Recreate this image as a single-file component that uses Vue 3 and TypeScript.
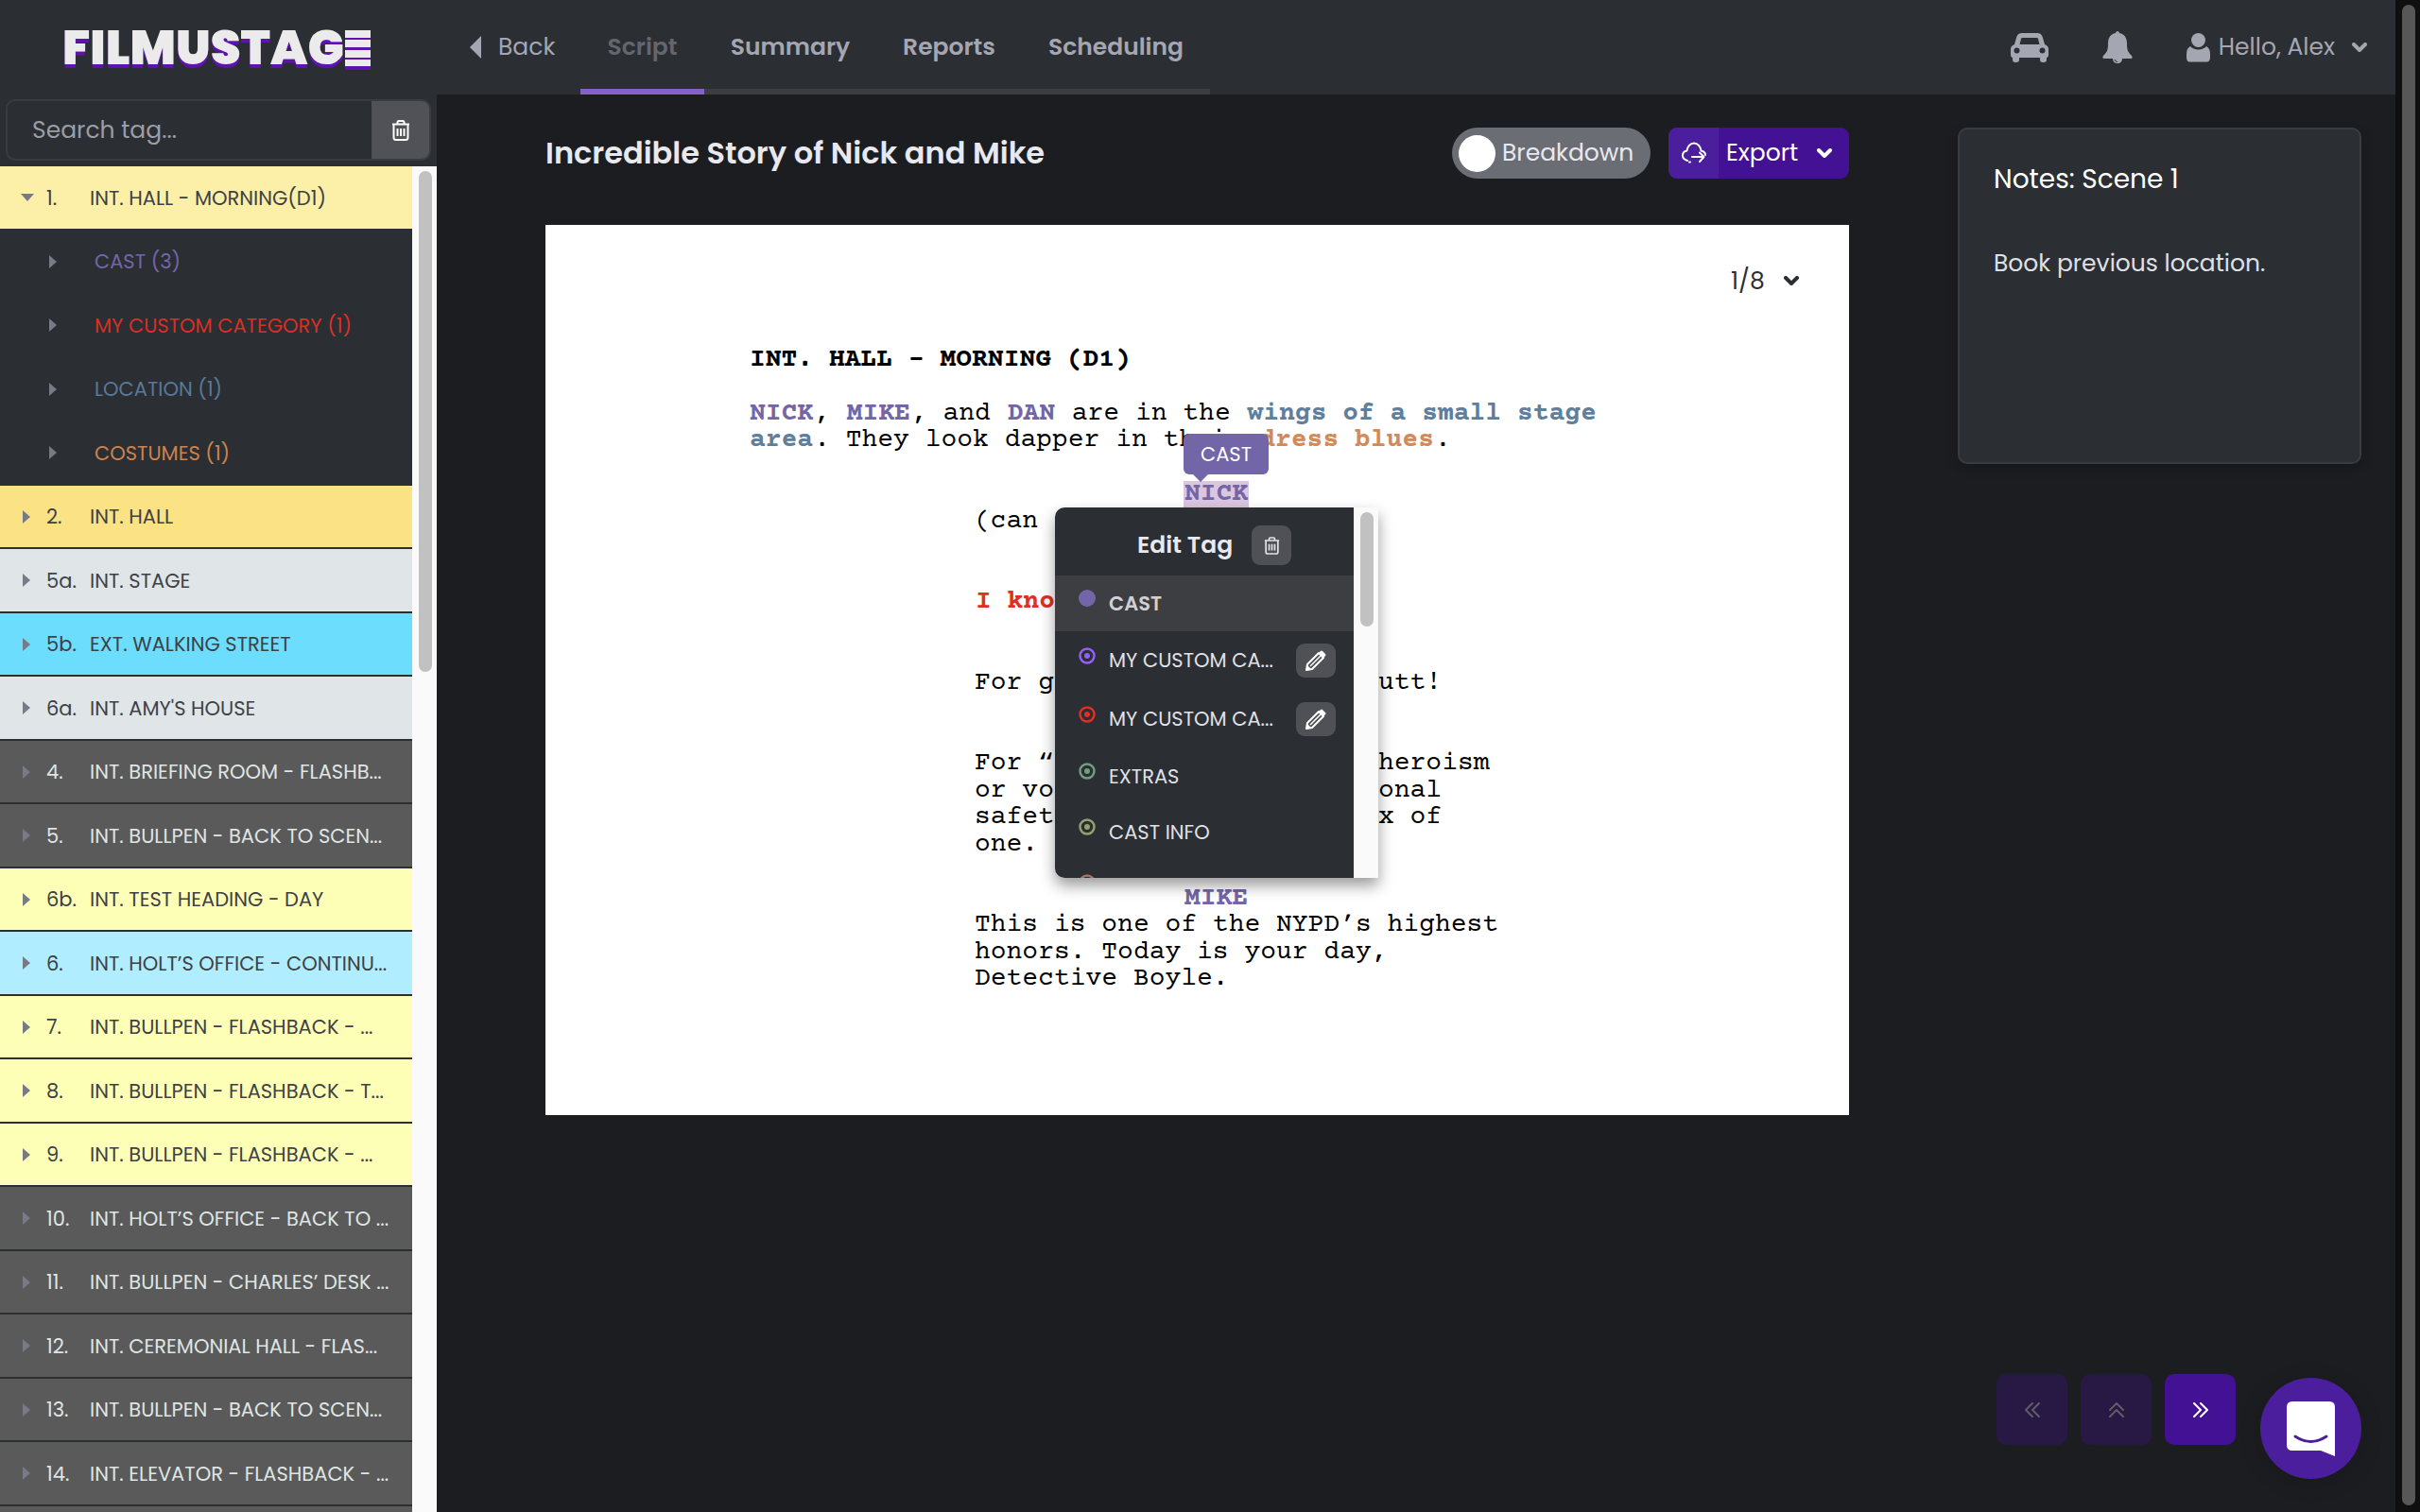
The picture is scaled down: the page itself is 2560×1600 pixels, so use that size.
<script setup lang="ts">
import { ref } from 'vue'

interface Row {
  no?: string
  title: string
  tone: string
  open?: boolean
  child?: boolean
}

interface Segment {
  text: string
  tag?: string
}

interface Line {
  row: number
  indent: string
  segments: Segment[]
  active?: boolean
}

const rows: Row[] = [
  { no: '1.', title: 'INT. HALL - MORNING(D1)', tone: 'cream', open: true },
  { title: 'CAST (3)', tone: 'cast', child: true },
  { title: 'MY CUSTOM CATEGORY (1)', tone: 'custom', child: true },
  { title: 'LOCATION (1)', tone: 'location', child: true },
  { title: 'COSTUMES (1)', tone: 'costumes', child: true },
  { no: '2.', title: 'INT. HALL', tone: 'gold' },
  { no: '5a.', title: 'INT. STAGE', tone: 'silver' },
  { no: '5b.', title: 'EXT. WALKING STREET', tone: 'cyan' },
  { no: '6a.', title: "INT. AMY'S HOUSE", tone: 'silver' },
  { no: '4.', title: 'INT. BRIEFING ROOM - FLASHB...', tone: 'gray' },
  { no: '5.', title: 'INT. BULLPEN - BACK TO SCEN...', tone: 'gray' },
  { no: '6b.', title: 'INT. TEST HEADING - DAY', tone: 'lemon' },
  { no: '6.', title: 'INT. HOLT’S OFFICE - CONTINU...', tone: 'sky' },
  { no: '7.', title: 'INT. BULLPEN - FLASHBACK - ...', tone: 'lemon' },
  { no: '8.', title: 'INT. BULLPEN - FLASHBACK - T...', tone: 'lemon' },
  { no: '9.', title: 'INT. BULLPEN - FLASHBACK - ...', tone: 'lemon' },
  { no: '10.', title: 'INT. HOLT’S OFFICE - BACK TO ...', tone: 'gray' },
  { no: '11.', title: 'INT. BULLPEN - CHARLES’ DESK ...', tone: 'gray' },
  { no: '12.', title: 'INT. CEREMONIAL HALL - FLAS...', tone: 'gray' },
  { no: '13.', title: 'INT. BULLPEN - BACK TO SCEN...', tone: 'gray' },
  { no: '14.', title: 'INT. ELEVATOR - FLASHBACK - ...', tone: 'gray' },
  { no: '', title: '', tone: 'gray' },
]

const tabs = ['Script', 'Summary', 'Reports', 'Scheduling']

const lines: Line[] = [
  { row: 1, indent: 'action', segments: [{ text: 'INT. HALL - MORNING (D1)', tag: 'heading' }] },
  {
    row: 3,
    indent: 'action',
    segments: [
      { text: 'NICK', tag: 'cast' },
      { text: ', ' },
      { text: 'MIKE', tag: 'cast' },
      { text: ', and ' },
      { text: 'DAN', tag: 'cast' },
      { text: ' are in the ' },
      { text: 'wings of a small stage', tag: 'location' },
    ],
  },
  {
    row: 4,
    indent: 'action',
    segments: [
      { text: 'area', tag: 'location' },
      { text: '. They look dapper in their ' },
      { text: 'dress blues', tag: 'costumes' },
      { text: '.' },
    ],
  },
  { row: 6, indent: 'speaker', segments: [{ text: 'NICK', tag: 'cast' }], active: true },
  { row: 7, indent: 'speech', segments: [{ text: '(can' }] },
  { row: 10, indent: 'speech', segments: [{ text: 'I kno', tag: 'custom' }] },
  { row: 13, indent: 'speech', segments: [{ text: 'For g' }] },
  { row: 13, indent: 'tail', segments: [{ text: 'utt!' }] },
  { row: 16, indent: 'speech', segments: [{ text: 'For “' }] },
  { row: 16, indent: 'tail', segments: [{ text: 'heroism' }] },
  { row: 17, indent: 'speech', segments: [{ text: 'or vo' }] },
  { row: 17, indent: 'tail', segments: [{ text: 'onal' }] },
  { row: 18, indent: 'speech', segments: [{ text: 'safet' }] },
  { row: 18, indent: 'tail', segments: [{ text: 'x of' }] },
  { row: 19, indent: 'speech', segments: [{ text: 'one.' }] },
  { row: 21, indent: 'speaker', segments: [{ text: 'MIKE', tag: 'cast' }] },
  { row: 22, indent: 'speech', segments: [{ text: 'This is one of the NYPD’s highest' }] },
  { row: 23, indent: 'speech', segments: [{ text: 'honors. Today is your day,' }] },
  { row: 24, indent: 'speech', segments: [{ text: 'Detective Boyle.' }] },
]

const categories = [
  { label: 'CAST', color: '#7366a8', selected: true },
  { label: 'MY CUSTOM CA...', color: '#9360f5', editable: true },
  { label: 'MY CUSTOM CA...', color: '#e02f23', editable: true },
  { label: 'EXTRAS', color: '#6f9f7d' },
  { label: 'CAST INFO', color: '#95a070' },
  { label: '', color: '#a9745f' },
]

const search = ref('')
const breakdown = ref(false)
const pageLength = ref('1/8')
</script>

<template>
  <div class="app">
    <header class="topbar">
      <a class="logo" href="#" aria-label="Filmustage">FILMUSTAG<span class="logo-e">E</span></a>
      <a class="back" href="#">
        <svg width="12" height="24" viewBox="0 0 12 24"><path d="M12 0v24L0 12z" fill="currentColor" /></svg>
        Back
      </a>
      <nav class="tabs">
        <a v-for="(tab, i) in tabs" :key="tab" href="#" :class="['tab', { current: i === 0 }]">{{ tab }}</a>
      </nav>
      <div class="account">
        <button class="icon-button" type="button" aria-label="Transport">
          <svg width="40" height="32" viewBox="0 0 40 32" fill="currentColor">
            <path
              fill-rule="evenodd"
              d="M13 1h14c4 0 6 1 7 5l2 7c3 1 4 3 4 5v6c0 2-1 3-2 3v2a3 3 0 0 1-3 3h-1a3 3 0 0 1-3-3v-2H9v2a3 3 0 0 1-3 3H5a3 3 0 0 1-3-3v-2c-1 0-2-1-2-3v-6c0-2 1-4 4-5l2-7c1-4 3-5 7-5zM13 6c-1 0-2 0-2 1l-1.500 6h21L29 7c0-1-1-1-2-1zM6.500 16.500a3 3 0 1 0 0 6 3 3 0 0 0 0-6zM33.500 16.500a3 3 0 1 0 0 6 3 3 0 0 0 0-6z"
            />
          </svg>
        </button>
        <button class="icon-button" type="button" aria-label="Notifications">
          <svg width="32" height="34" viewBox="0 0 32 34" fill="currentColor">
            <path d="M16 0c1 0 2 1 2 2 6 1 8 6 8 11 0 7 1 9 5 13 1 1 1 3-1 3H2c-2 0-2-2-1-3 4-4 5-6 5-13 0-5 2-10 8-11 0-1 1-2 2-2z" />
            <path d="M11 29h10c0 3-2 5-5 5s-5-2-5-5z" />
            <path d="M13 30q1 2.500 3 2.500" fill="none" stroke="#2b2e32" />
          </svg>
        </button>
        <button class="user" type="button">
          <svg width="25" height="31" viewBox="0 0 25 31" fill="currentColor">
            <circle cx="12.500" cy="7.500" r="7.500" />
            <path d="M4 14c2 2 5 3.500 8.500 3.500s6.500-1.500 8.500-3.500c3 1.500 4 4.500 4 8.500v3c0 3-1 5-4 5H4c-3 0-4-2-4-5v-3c0-4 1-7 4-8.500z" />
          </svg>
          <span>Hello, Alex</span>
          <svg class="chevron" width="16" height="10" viewBox="0 0 16 10"><path d="M2 2l6 6 6-6" /></svg>
        </button>
      </div>
    </header>

    <div class="body">
      <aside class="sidebar">
        <form class="search" @submit.prevent>
          <input v-model="search" type="text" placeholder="Search tag..." aria-label="Search tag" />
          <button type="button" aria-label="Clear search">
            <svg class="trash" width="20" height="22" viewBox="0 0 20 22">
              <path d="M1 4.500h18M6.500 4V2.500Q6.500 1 8 1h4q1.500 0 1.500 1.500V4M2.500 5v13.500Q2.500 21 5 21h10q2.500 0 2.500-2.500V5M6.500 9v8M10 9v8M13.500 9v8" />
            </svg>
          </button>
        </form>
        <div class="scenes">
          <ul class="scene-list">
            <li v-for="(row, i) in rows" :key="i" :class="['scene', row.tone, { child: row.child }]">
              <svg v-if="row.open" class="arrow open" width="14" height="8" viewBox="0 0 14 8"><path d="M0 0h14L7 8z" /></svg>
              <svg v-else-if="row.title" class="arrow" width="8" height="14" viewBox="0 0 8 14"><path d="M0 0l8 7-8 7z" /></svg>
              <span v-if="!row.child" class="number">{{ row.no }}</span>
              <span class="name">{{ row.title }}</span>
            </li>
          </ul>
          <div class="track"><div class="thumb"></div></div>
        </div>
      </aside>

      <main class="main">
        <div class="columns">
          <section class="document">
            <div class="toolbar">
              <h1>Incredible Story of Nick and Mike</h1>
              <label class="switch">
                <input v-model="breakdown" type="checkbox" />
                Breakdown
              </label>
              <button class="export" type="button">
                <span class="export-icon">
                  <svg width="26" height="24" viewBox="0 0 26 24">
                    <path d="M6 20C3 19 1 17 1 14.500 1 12 3 10 5.500 9.500 6 5 9 1.500 13 1.500S20 5 20.500 9.500C23 10 25 11.500 25 14M9 21.500H8M11 16h12M19 11.500l4.500 4.500-4.500 5" />
                  </svg>
                </span>
                <span>Export</span>
                <svg class="chevron" width="16" height="10" viewBox="0 0 16 10"><path d="M2 2l6 6 6-6" /></svg>
              </button>
            </div>

            <article class="paper">
              <label class="length">
                <select v-model="pageLength" aria-label="Scene length">
                  <option>1/8</option>
                </select>
                <svg class="chevron" width="16" height="10" viewBox="0 0 16 10"><path d="M2 2l6 6 6-6" /></svg>
              </label>
              <div class="script">
                <p
                  v-for="(line, i) in lines"
                  :key="i"
                  :class="['line', line.indent]"
                  :style="{ gridRow: line.row }"
                ><span v-for="(seg, j) in line.segments" :key="j" :class="[seg.tag ? 'tag' : 'plain', seg.tag, { active: line.active }]">{{ seg.text }}</span><span v-if="line.active" class="tooltip">CAST</span>
                  <span v-if="line.active" class="popup">
                    <span class="popup-body">
                      <span class="popup-head">
                        <strong>Edit Tag</strong>
                        <button class="mini square" type="button" aria-label="Delete tag">
                          <svg class="trash" width="17" height="19" viewBox="0 0 20 22">
                            <path d="M1 4.500h18M6.500 4V2.500Q6.500 1 8 1h4q1.500 0 1.500 1.500V4M2.500 5v13.500Q2.500 21 5 21h10q2.500 0 2.500-2.500V5M6.500 9v8M10 9v8M13.500 9v8" />
                          </svg>
                        </button>
                      </span>
                      <span
                        v-for="(cat, k) in categories"
                        :key="k"
                        :class="['category', { selected: cat.selected, editable: cat.editable }]"
                      >
                        <svg class="dot" width="18" height="18" viewBox="0 0 18 18">
                          <circle v-if="cat.selected" cx="9" cy="9" r="9" :fill="cat.color" />
                          <template v-else>
                            <circle cx="9" cy="9" r="7.500" fill="none" stroke-width="2.500" :stroke="cat.color" />
                            <circle cx="9" cy="9" r="3" :fill="cat.color" />
                          </template>
                        </svg>
                        <span class="category-name">{{ cat.label }}</span>
                        <button v-if="cat.editable" class="mini" type="button" aria-label="Edit category">
                          <svg width="22" height="22" viewBox="0 0 22 22">
                            <path d="M1 21l1-6L14 3l5 5L7 20z" fill="none" stroke="#fff" stroke-width="2" stroke-linejoin="round" />
                            <path d="M5 17l11-11" stroke="#fff" stroke-width="1.500" />
                            <path d="M14 3l2-2q1-1 2 0l3 3q1 1 0 2l-2 2zM1 21l1-5 4 4z" fill="#fff" />
                          </svg>
                        </button>
                      </span>
                    </span>
                    <span class="popup-track"><span class="popup-thumb"></span></span>
                  </span>
                </p>
              </div>
            </article>
          </section>

          <aside class="notes">
            <h2>Notes: Scene 1</h2>
            <p>Book previous location.</p>
          </aside>
        </div>

        <footer class="actions">
          <button class="page-button" type="button" disabled aria-label="Previous scene">
            <svg width="16" height="16" viewBox="0 0 16 16"><path d="M8 1L1 8l7 7M15 1L8 8l7 7" /></svg>
          </button>
          <button class="page-button" type="button" disabled aria-label="Scroll to top">
            <svg width="16" height="16" viewBox="0 0 16 16"><path d="M1 8l7-7 7 7M1 15l7-7 7 7" /></svg>
          </button>
          <button class="page-button" type="button" aria-label="Next scene">
            <svg width="16" height="16" viewBox="0 0 16 16"><path d="M8 1l7 7-7 7M1 1l7 7-7 7" /></svg>
          </button>
          <button class="chat" type="button" aria-label="Open chat">
            <svg width="51" height="58" viewBox="0 0 51 58">
              <path d="M6 0h39q6 0 6 6v52l-15-6H6q-6 0-6-6V6q0-6 6-6z" fill="#fff" />
              <path d="M9 37q16.500 11 33 0" fill="none" stroke="#4b1e9e" stroke-width="3" stroke-linecap="round" />
            </svg>
          </button>
        </footer>
      </main>
    </div>
    <div class="page-track"><div class="page-thumb"></div></div>
  </div>
</template>

<style>
body {
  margin: 0;
  background: #1c1d21;
}
</style>

<style scoped>
* {
  box-sizing: border-box;
}

.app {
  display: grid;
  grid-template-columns: 1fr 26px;
  grid-template-rows: 100px 1fr;
  height: 100vh;
  overflow: hidden;
  font-family: Poppins, Inter, sans-serif;
  font-size: 25px;
  color: #e8e9ef;
  background: #1c1d21;
}

button,
input,
select {
  margin: 0;
  padding: 0;
  border: 0;
  background: none;
  color: inherit;
  font: inherit;
}

a {
  color: inherit;
  text-decoration: none;
}

h1,
h2,
p,
ul {
  margin: 0;
  padding: 0;
}

.chevron {
  fill: none;
  stroke: currentColor;
  stroke-width: 4;
  stroke-linecap: round;
  stroke-linejoin: round;
}

.trash {
  fill: none;
  stroke: currentColor;
  stroke-width: 2;
}

/* Top bar */
.topbar {
  display: flex;
  align-items: center;
  background: #2b2e32;
  color: #a4a7b2;
}

.logo {
  width: 497px;
  padding-left: 66px;
  font-size: 51px;
  line-height: 60px;
  font-weight: 900;
  color: #ebebeb;
  text-shadow: 0 4px 0 #6012b0;
}

.logo-e {
  position: relative;
}

/* Film-strip bars laid over the last letter */
.logo-e::after {
  content: '';
  position: absolute;
  left: 1px;
  top: 18px;
  width: 27px;
  height: 42px;
  background: linear-gradient(
    #ebebeb 8px,
    #6012b0 8px 10px,
    #ebebeb 10px 18px,
    #6012b0 18px 21px,
    #ebebeb 21px 29px,
    #6012b0 29px 31px,
    #ebebeb 31px 38px,
    #6012b0 38px
  );
}

.back {
  display: flex;
  align-items: center;
  gap: 18px;
  width: 117px;
}

.tabs {
  display: grid;
  grid-template-columns: 131px 182px 154px 199px;
  align-self: stretch;
  font-weight: 600;
}

.tab {
  display: flex;
  align-items: center;
  justify-content: center;
  border-top: 6px solid transparent;
  border-bottom: 6px solid #3c3d41;
}

.tab.current {
  color: #64666d;
  border-bottom-color: #8661c9;
}

.account {
  display: flex;
  align-items: center;
  gap: 57px;
  margin-left: auto;
  padding-right: 30px;
}

.icon-button {
  display: flex;
}

.user {
  display: flex;
  align-items: center;
  gap: 9px;
}

.user .chevron {
  margin-left: 9px;
}

/* Sidebar */
.body {
  display: flex;
  min-height: 0;
  grid-row: 2;
}

.sidebar {
  display: flex;
  flex-direction: column;
  width: 462px;
  background: #2b2e32;
}

.search {
  display: flex;
  flex: none;
  height: 65px;
  margin: 5px 6px 6px;
  border: 2px solid #3b3c40;
  border-radius: 10px;
  overflow: hidden;
}

.search input {
  flex: 1;
  min-width: 0;
  padding-left: 26px;
  outline: 0;
}

.search input::placeholder {
  color: #9b9da7;
  opacity: 1;
}

.search button {
  display: flex;
  align-items: center;
  justify-content: center;
  width: 61px;
  background: #505257;
  color: #fff;
}

.scenes {
  display: flex;
  flex: 1;
  min-height: 0;
}

.scene-list {
  display: grid;
  grid-auto-rows: 68px 67px;
  flex: 1;
  overflow: hidden;
  list-style: none;
}

.scene {
  display: flex;
  align-items: center;
  padding-left: 24px;
  border-bottom: 2px solid #2b2e32;
  font-size: 21px;
  color: #3e4145;
  white-space: nowrap;
}

.arrow {
  margin-right: 6px;
  fill: #787a86;
}

.arrow.open {
  margin-left: -2px;
  margin-right: 2px;
}

.number {
  width: 46px;
  margin-left: 11px;
}

.child {
  padding-left: 52px;
}

.child .name {
  margin-left: 34px;
}

.cream { background: #fcf0a8; }
.gold { background: #fbe385; }
.silver { background: #e0e5e8; }
.cyan { background: #6dddfd; }
.sky { background: #b0edfe; }
.lemon { background: #feffb6; }
.scene.gray { background: #5a5a5a; color: #dfe5e4; }
.scene.cast { color: #7366a8; }
.scene.custom { color: #d93025; }
.scene.location { color: #58799a; }
.scene.costumes { color: #cd834f; }

.track {
  width: 26px;
  padding: 5px 5px 0 7px;
  background: #fafafa;
}

.thumb {
  height: 530px;
  border-radius: 7px;
  background: #c1c1c1;
}

/* Main area */
.main {
  display: flex;
  flex: 1;
  flex-direction: column;
  min-width: 0;
  padding: 35px 36px 35px 115px;
}

.columns {
  display: flex;
  align-items: flex-start;
  gap: 115px;
}

.document {
  flex: 1;
  min-width: 0;
}

.toolbar {
  display: flex;
  align-items: center;
  height: 54px;
  margin-bottom: 49px;
}

h1 {
  margin-right: auto;
  font-size: 32px;
  font-weight: 600;
}

.switch {
  display: flex;
  align-items: center;
  gap: 7px;
  width: 210px;
  height: 54px;
  padding-left: 7px;
  border-radius: 27px;
  background: #6b6d75;
}

.switch input {
  appearance: none;
  width: 39px;
  height: 39px;
  border-radius: 50%;
  background: #fff;
}

.export {
  display: flex;
  align-items: center;
  width: 191px;
  height: 54px;
  margin-left: 19px;
  border-radius: 9px;
  background: #431194;
  color: #fff;
  overflow: hidden;
}

.export-icon {
  display: flex;
  align-items: center;
  justify-content: center;
  width: 53px;
  height: 54px;
  margin-right: 8px;
  background: #4b1e9e;
}

.export-icon svg {
  fill: none;
  stroke: #fff;
  stroke-width: 2;
  stroke-linecap: round;
  stroke-linejoin: round;
}

.export .chevron {
  margin-left: auto;
  margin-right: 18px;
}

.paper {
  padding: 41px 53px 129px;
  background: #fff;
}

.length {
  display: flex;
  align-items: center;
  justify-content: flex-end;
  gap: 20px;
  height: 36px;
  color: #2b2e32;
}

.length select {
  appearance: none;
}

.script {
  display: grid;
  grid-auto-rows: 28px 29px;
  margin: 52px 0 0 162px;
  font-family: 'Courier Prime', 'Liberation Mono', monospace;
  font-size: 28px;
  line-height: 28px;
  color: #000;
}

.line {
  grid-column: 1;
  position: relative;
  white-space: pre;
}

.action { margin-left: 0; }
.speech { margin-left: 239px; }
.speaker { margin-left: 460px; }
.tail { margin-left: 666px; }

.tag {
  padding: 0 1px;
  font-weight: 700;
}

.tag.cast { color: #7366a8; }
.tag.location { color: #5f7f9c; }
.tag.costumes { color: #d38a58; }
.tag.custom { color: #e02f23; }

.tag.active {
  display: inline-block;
  background: #dac6de;
}

.tooltip {
  position: absolute;
  left: 0;
  bottom: 36px;
  width: 90px;
  height: 43px;
  border-radius: 6px;
  background: #7366a8;
  color: #fff;
  font-family: Poppins, Inter, sans-serif;
  font-size: 21px;
  line-height: 43px;
  text-align: center;
}

.tooltip::after {
  content: '';
  position: absolute;
  left: 9px;
  top: 42px;
  border: 9px solid transparent;
  border-top-color: #7366a8;
  border-bottom: 0;
}

.popup {
  position: absolute;
  left: -136px;
  top: 28px;
  z-index: 1;
  display: flex;
  width: 342px;
  height: 392px;
  border-radius: 10px 0 0 10px;
  overflow: hidden;
  box-shadow: 0 8px 16px rgba(0, 0, 0, 0.4);
  font-family: Poppins, Inter, sans-serif;
  color: #e0e1e6;
  white-space: normal;
}

.popup-body {
  flex: 1;
  overflow: hidden;
  background: #2b2e32;
}

.popup-head {
  display: flex;
  align-items: center;
  gap: 20px;
  height: 72px;
  padding: 8px 0 0 87px;
  font-size: 25px;
}

.popup-head strong {
  font-weight: 600;
  color: #e8e9ef;
}

.mini {
  display: flex;
  align-items: center;
  justify-content: center;
  width: 42px;
  height: 36px;
  border-radius: 9px;
  background: #505156;
}

.mini.square {
  height: 42px;
}

.category {
  display: flex;
  align-items: center;
  height: 59px;
  padding: 0 19px 0 25px;
  font-size: 21px;
}

.category.editable {
  height: 62px;
}

.category.selected {
  background: #3d3e42;
  color: #cfd0d4;
  font-weight: 600;
}

.dot {
  margin-bottom: 11px;
}

.category-name {
  flex: 1;
  margin-left: 14px;
}

.popup-track {
  width: 26px;
  padding: 5px 5px 0 7px;
  background: #fafafa;
}

.popup-thumb {
  display: block;
  height: 121px;
  border-radius: 7px;
  background: #c1c1c1;
}

/* Notes */
.notes {
  width: 427px;
  min-height: 356px;
  padding: 34px 36px;
  border: 2px solid #3b3c40;
  border-radius: 10px;
  background: #2b2e32;
  box-shadow: 0 4px 12px rgba(0, 0, 0, 0.2);
}

h2 {
  margin-bottom: 52px;
  font-size: 28px;
  line-height: 38px;
  font-weight: 400;
  color: #fff;
}

.notes p {
  line-height: 36px;
  color: #dfe0e6;
}

/* Scene pager and chat launcher */
.actions {
  display: flex;
  justify-content: flex-end;
  gap: 14px;
  margin-top: auto;
}

.page-button {
  display: flex;
  align-items: center;
  justify-content: center;
  width: 75px;
  height: 75px;
  border-radius: 10px;
  background: #431194;
  color: #fff;
}

.page-button:disabled {
  background: #271944;
  color: #5f5c66;
}

.page-button svg {
  fill: none;
  stroke: currentColor;
  stroke-width: 2;
  stroke-linecap: round;
  stroke-linejoin: round;
}

.chat {
  display: flex;
  align-items: center;
  justify-content: center;
  width: 107px;
  height: 107px;
  margin: 4px 0 0 12px;
  border-radius: 50%;
  background: #4b1e9e;
  box-shadow: 0 4px 24px rgba(0, 0, 0, 0.15);
}

.page-track {
  grid-column: 2;
  grid-row: 1 / 3;
  padding: 5px 5px 7px 7px;
  background: #0f0f10;
}

.page-thumb {
  height: 100%;
  border-radius: 7px;
  background: #575757;
}
</style>
